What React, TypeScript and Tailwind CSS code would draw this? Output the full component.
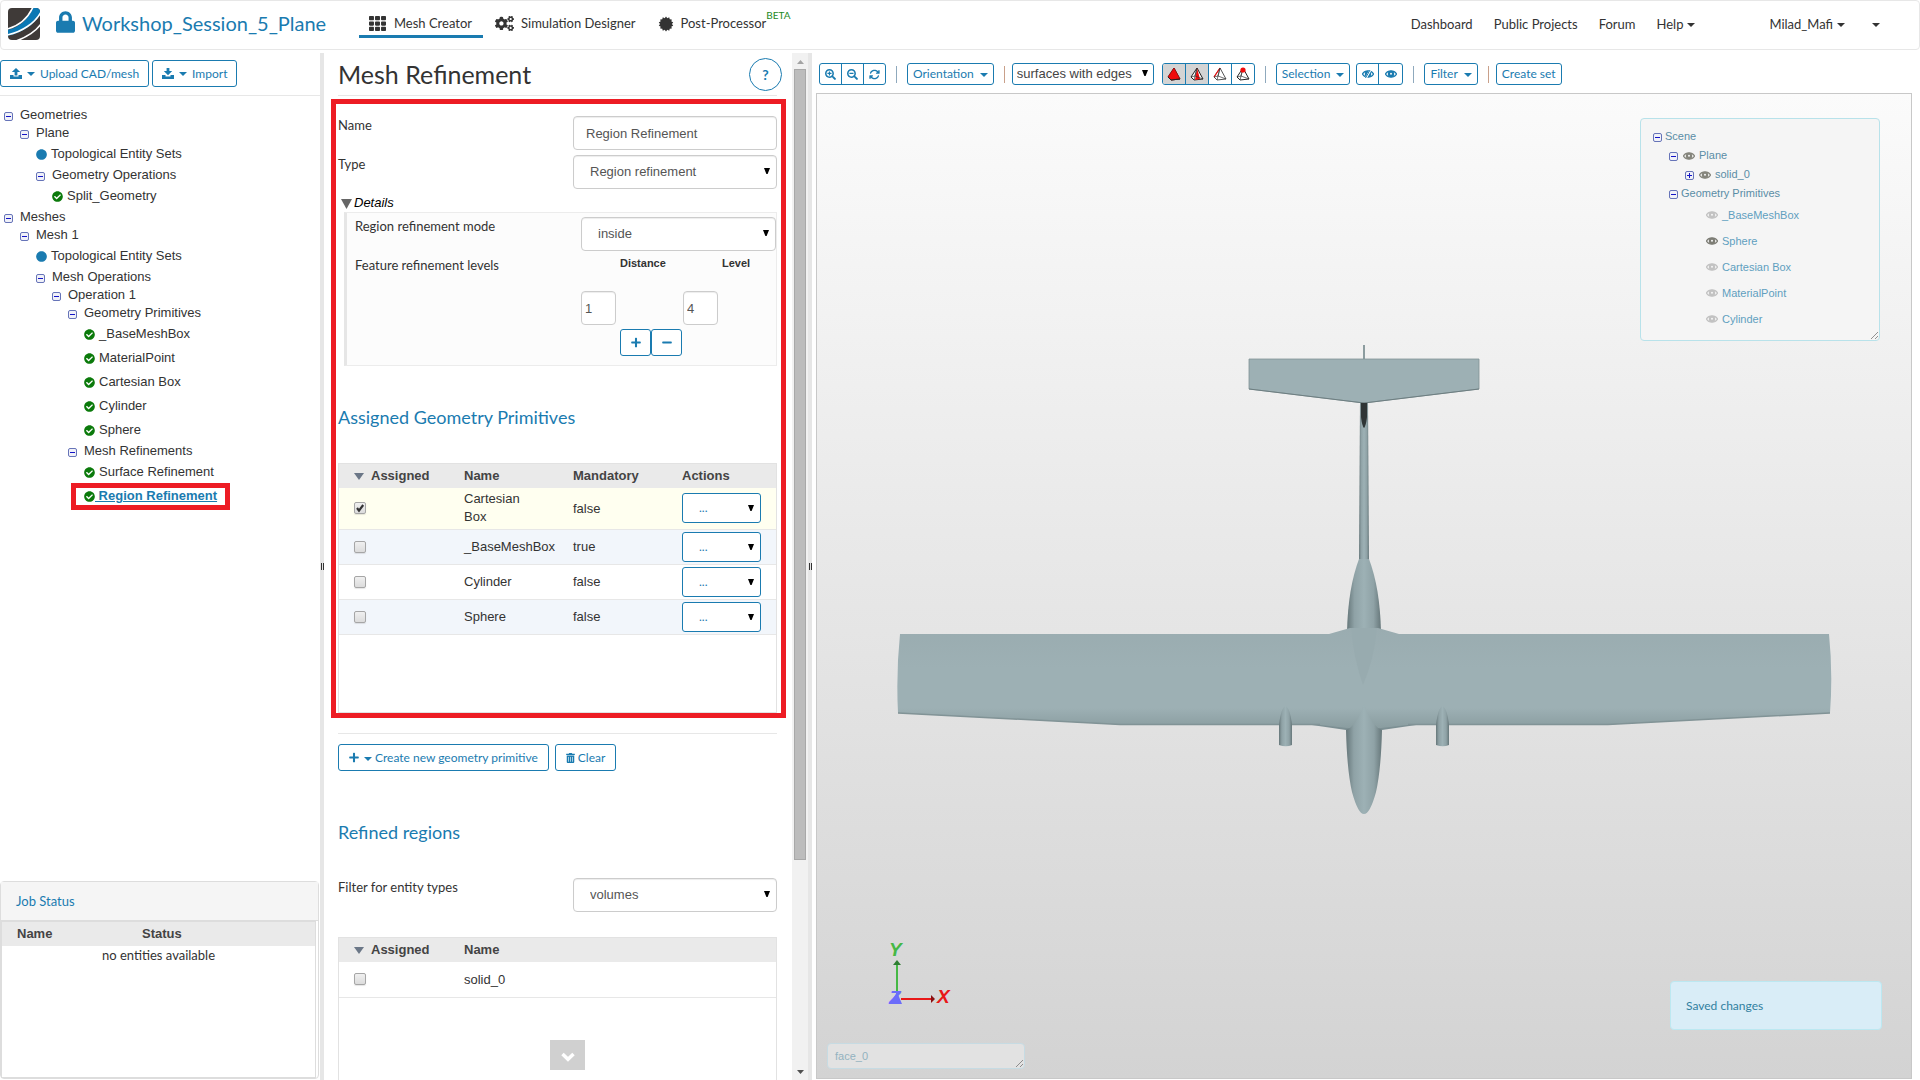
import React, { useState } from "react";
import clsx from "clsx";
import {
  FaCheckCircle,
  FaCircle,
  FaCogs,
  FaLock,
  FaMinus,
  FaPlus,
  FaSearchMinus,
  FaSearchPlus,
  FaTh,
  FaTrashAlt,
} from "react-icons/fa";
import { FaArrowsRotate } from "react-icons/fa6";

const lato = "font-['Lato','Liberation_Sans',sans-serif]";
const btn =
  "inline-flex items-center justify-center border border-[#1a7bb0] bg-white text-[#1a7bb0] text-[12px] rounded-[3px]";

function Caret({ className }: { className?: string }) {
  return (
    <svg viewBox="0 0 8 4" className={clsx("w-2 h-1 shrink-0", className)} fill="currentColor" aria-hidden>
      <path d="M0 0h8L4 4z" />
    </svg>
  );
}

function Logo() {
  return (
    <svg viewBox="0 0 32 32" className="w-8 h-8 shrink-0" aria-hidden>
      <defs>
        <clipPath id="logo-clip">
          <rect width="32" height="32" rx="4" />
        </clipPath>
      </defs>
      <g clipPath="url(#logo-clip)">
        <rect width="32" height="32" fill="#3f3a38" />
        <path d="M-1 22C11 20 21 11 25 -1H34V4C28 15 15 25 -1 28z" fill="#0a78b4" />
        <path d="M-1 21C11 18 20 10 25 -1" fill="none" stroke="#fff" strokeWidth="1.6" />
        <path d="M-1 27C14 24 27 15 33 4" fill="none" stroke="#fff" strokeWidth="1.6" />
        <path d="M8 33C19 29 28 23 33 16" fill="none" stroke="#fff" strokeWidth="1.6" />
      </g>
    </svg>
  );
}

function Badge() {
  const points = Array.from({ length: 28 }, (_, i) => {
    const r = i % 2 ? 6 : 7.4;
    const a = (i * Math.PI) / 14;
    return `${(8 + r * Math.sin(a)).toFixed(2)},${(8 - r * Math.cos(a)).toFixed(2)}`;
  }).join(" ");
  return (
    <svg viewBox="0 0 16 16" className="w-4 h-4" fill="currentColor" aria-hidden>
      <polygon points={points} />
    </svg>
  );
}

function TrayIcon({ down }: { down?: boolean }) {
  return (
    <svg viewBox="0 0 12 11" className="w-3 h-[11px]" fill="currentColor" aria-hidden>
      <path d="M0 7h3.5v1.4h5V7H12v4H0z" />
      {down ? <path d="M4.6 0h2.8v3h2.8L6 7.2 1.8 3h2.8z" /> : <path d="M6 0l4.2 4H7.4v3.4H4.6V4H1.8z" />}
    </svg>
  );
}

function Eye({ off, className }: { off?: boolean; className?: string }) {
  return (
    <svg viewBox="0 0 12 8" className={clsx("w-3 h-2 shrink-0", className)} aria-hidden>
      <path d="M.4 4C3 -.2 9 -.2 11.6 4 9 8.2 3 8.2 .4 4z" fill="none" stroke="currentColor" strokeWidth="1.2" />
      <circle cx="6" cy="4" r="3.2" fill="currentColor" />
      <circle cx="6" cy="3.7" r="1" fill="#f5f5f5" />
      {off && <path d="M4 8L8.5 0" stroke="#fff" strokeWidth="2" />}
      {off && <path d="M3.5 8L8 0" stroke="currentColor" strokeWidth="1" />}
    </svg>
  );
}

function Toggle({ plus }: { plus?: boolean }) {
  return (
    <svg viewBox="0 0 9 9" className="w-[9px] h-[9px] shrink-0 mt-[2px]" aria-hidden>
      <rect x=".5" y=".5" width="8" height="8" rx="1.5" fill="#f0f1f8" stroke="#6674b8" />
      <path d={plus ? "M2 4.5h5M4.5 2v5" : "M2 4.5h5"} stroke="#1414c8" />
    </svg>
  );
}

function Cone({ faces, edges }: { faces: string; edges?: boolean }) {
  return (
    <svg viewBox="0 0 14 14" className="w-[14px] h-[14px]" aria-hidden>
      <path d="M7 1L1 10l3 3 9-1z" fill="#fff" stroke={edges ? "#222" : "#555"} strokeWidth="1" />
      {faces === "all" && <path d="M7 1L1 10l3 3 9-1z" fill="#f00c0c" stroke="#a00" strokeWidth=".6" />}
      {faces === "front" && <path d="M7 1L5 13l5-1z" fill="#f00c0c" />}
      {faces === "edge" && <path d="M7 1L1 10" stroke="#f00c0c" strokeWidth="1.2" />}
      {faces !== "all" && <path d="M7 1L5 9l-4 1M5 9l8 3M7 1l-3 12" fill="none" stroke="#333" strokeWidth=".7" />}
      {faces === "all" && <path d="M1 10l3 3 9-1" fill="none" stroke="#222" strokeWidth="1" />}
      {faces === "point" && <circle cx="7" cy="3" r="2.6" fill="#f00c0c" />}
    </svg>
  );
}

type Option = { id: string; value: string; className?: string };

function FormSelect({ id, value, className }: Option) {
  return (
    <div className={clsx("relative", className)}>
      <select
        id={id}
        className="appearance-none w-full h-[34px] pl-4 pr-6 border border-[#ccc] rounded-[4px] bg-white text-[13px] text-[#555] shadow-[inset_0_1px_1px_rgba(0,0,0,0.075)]"
      >
        <option>{value}</option>
      </select>
      <Arrow className="right-[7px] top-[13px]" />
    </div>
  );
}

function Arrow({ className }: { className?: string }) {
  return (
    <svg viewBox="0 0 6 6" className={clsx("absolute w-[6px] h-[6px] pointer-events-none", className)} aria-hidden>
      <path d="M0 0h6L3.6 6H2.4z" />
    </svg>
  );
}

function Check({ label, checked }: { label: string; checked?: boolean }) {
  return (
    <span className="relative block w-3 h-3">
      <input
        type="checkbox"
        aria-label={label}
        defaultChecked={checked}
        className="peer appearance-none block w-3 h-3 border border-[#a6a6a6] rounded-[2px] bg-gradient-to-b from-[#f0f0f0] to-[#dcdcdc] shadow-[0_1px_1px_rgba(0,0,0,0.1)]"
      />
      <svg viewBox="0 0 12 12" className="absolute inset-0 hidden peer-checked:block pointer-events-none">
        <path d="M3 6l2 2.6L9.2 3" fill="none" stroke="#333" strokeWidth="2.2" />
      </svg>
    </span>
  );
}

type Node = { level: number; label: string; kind: "folder" | "set" | "done"; active?: boolean };

const tree: Node[] = [
  { level: 0, label: "Geometries", kind: "folder" },
  { level: 1, label: "Plane", kind: "folder" },
  { level: 2, label: "Topological Entity Sets", kind: "set" },
  { level: 2, label: "Geometry Operations", kind: "folder" },
  { level: 3, label: "Split_Geometry", kind: "done" },
  { level: 0, label: "Meshes", kind: "folder" },
  { level: 1, label: "Mesh 1", kind: "folder" },
  { level: 2, label: "Topological Entity Sets", kind: "set" },
  { level: 2, label: "Mesh Operations", kind: "folder" },
  { level: 3, label: "Operation 1", kind: "folder" },
  { level: 4, label: "Geometry Primitives", kind: "folder" },
  { level: 5, label: "_BaseMeshBox", kind: "done" },
  { level: 5, label: "MaterialPoint", kind: "done" },
  { level: 5, label: "Cartesian Box", kind: "done" },
  { level: 5, label: "Cylinder", kind: "done" },
  { level: 5, label: "Sphere", kind: "done" },
  { level: 4, label: "Mesh Refinements", kind: "folder" },
  { level: 5, label: "Surface Refinement", kind: "done" },
  { level: 5, label: "Region Refinement", kind: "done", active: true },
];

const indent = ["pl-1", "pl-5", "pl-9", "pl-[52px]", "pl-[68px]", "pl-[84px]"];

const sceneItems = [
  { label: "_BaseMeshBox", on: false },
  { label: "Sphere", on: true },
  { label: "Cartesian Box", on: false },
  { label: "MaterialPoint", on: false },
  { label: "Cylinder", on: false },
];

const primitives = [
  { name: "Cartesian Box", mandatory: "false", checked: true },
  { name: "_BaseMeshBox", mandatory: "true", checked: false },
  { name: "Cylinder", mandatory: "false", checked: false },
  { name: "Sphere", mandatory: "false", checked: false },
];

function Header() {
  return (
    <header className={clsx("h-[50px] shrink-0 flex items-start border border-[#e7e7e7] rounded-[4px] pl-[7px] pr-[39px] text-[#333]", lato)}>
      <div className="mt-[7px]">
        <Logo />
      </div>
      <FaLock className="w-[19px] h-[22px] ml-4 mt-[10px] text-[#1a7bb0]" />
      <a href="#" className="ml-[7px] mt-2 text-[20px] leading-[28px] text-[#1a7bb0] w-[244px]">
        Workshop_Session_5_Plane
      </a>
      <nav className="flex ml-[33px] text-[13px]">
        <a href="#" className="flex items-center h-[37px] pl-[10px] pr-[11px] pt-[14px] pb-[3px] border-b-[3px] border-[#1a7bb0]">
          <FaTh className="w-[17px] h-[17px] mr-2" />
          Mesh Creator
        </a>
        <a href="#" className="flex items-center h-[37px] pt-[14px] pb-[6px] ml-3">
          <FaCogs className="w-[19px] h-[17px] mr-[7px]" />
          Simulation Designer
        </a>
        <a href="#" className="flex items-center h-[37px] pt-[14px] pb-[6px] ml-[22px]">
          <Badge />
          <span className="ml-[7px]">Post-Processor</span>
          <span className="-mt-[6px] text-[10px] leading-[12px] text-[#1d8a1d] self-start">BETA</span>
        </a>
      </nav>
      <nav className="flex items-center ml-auto mt-[13px] text-[13px] leading-[20px]">
        <a href="#">Dashboard</a>
        <a href="#" className="ml-[21px]">Public Projects</a>
        <a href="#" className="ml-[21px]">Forum</a>
        <button className="ml-[21px] flex items-center gap-1">
          Help <Caret className="mt-[2px]" />
        </button>
        <button className="ml-[74px] flex items-center gap-1">
          Milad_Mafi <Caret className="mt-[2px]" />
        </button>
        <button className="ml-[27px] h-5" aria-label="More">
          <Caret className="mt-[2px]" />
        </button>
      </nav>
    </header>
  );
}

function Sidebar() {
  return (
    <aside className="w-[320px] shrink-0 flex flex-col">
      <div className={clsx("h-[43px] shrink-0 border-b border-[#e7e7e7] flex gap-[3px] pt-[7px]", lato)}>
        <button className={clsx(btn, "h-[27px] px-[9px] gap-[5px]")}>
          <TrayIcon /> <Caret /> <span>Upload CAD/mesh</span>
        </button>
        <button className={clsx(btn, "h-[27px] px-[9px] gap-[5px]")}>
          <TrayIcon down /> <Caret /> <span>Import</span>
        </button>
      </div>
      <ul className="pt-[10px] text-[13px] leading-[18px]">
        {tree.map((n, i) => (
          <li key={i} className={clsx("flex items-center relative", indent[n.level], n.kind === "folder" ? "h-[18px]" : "h-6")}>
            {n.kind === "folder" && <Toggle />}
            {n.kind === "set" && <FaCircle className="w-[11px] h-[11px] text-[#1a7bb0]" />}
            {n.kind === "done" && <FaCheckCircle className="w-[11px] h-[11px] text-[#0b7a0b]" />}
            {n.active ? (
              <a href="#" className="font-bold underline text-[#1a7bb0] whitespace-pre">{" " + n.label}</a>
            ) : (
              <span className={n.kind === "folder" ? "ml-[7px]" : "ml-1"}>{n.label}</span>
            )}
            {n.active && <span className="absolute left-[71px] -top-px w-[159px] h-[27px] border-[5px] border-[#ed1c24]" />}
          </li>
        ))}
      </ul>
      <section className="mt-auto mb-px h-[198px] mr-px border border-[#ddd] rounded-[4px] flex flex-col">
        <h2 className={clsx("h-[39px] shrink-0 bg-[#f5f5f5] border-b border-[#ddd] pl-[15px] text-[13px] leading-[38px] text-[#1a7bb0]", lato)}>
          Job Status
        </h2>
        <div className="flex-1 mr-[2px] border border-[#ddd]">
          <table className="w-full table-fixed text-[13px]">
            <thead>
              <tr className="h-6 bg-[#eaeaea] text-[#444] text-left">
                <th className="w-[125px] pl-[15px]">Name</th>
                <th className="pl-[15px]">Status</th>
              </tr>
            </thead>
            <tbody>
              <tr>
                <td colSpan={2} className={clsx("text-center leading-[18px]", lato)}>no entities available</td>
              </tr>
            </tbody>
          </table>
        </div>
      </section>
    </aside>
  );
}

function Splitter() {
  return (
    <div className="w-1 shrink-0 bg-[#e6e6e6] flex items-center justify-center">
      <span className="w-[3px] h-[7px] border-x border-[#333]" />
    </div>
  );
}

function GridHead({ columns }: { columns: string[] }) {
  return (
    <thead>
      <tr className="h-6 bg-[#eaeaea] text-[#444] text-left">
        {columns.map((c, i) => (
          <th key={c} className={clsx("pl-[15px]", i === 0 && "w-[110px]")}>
            {i === 0 ? (
              <span className="flex items-center gap-[7px]">
                <svg viewBox="0 0 10 7" className="w-[10px] h-[7px]" aria-hidden>
                  <path d="M0 0h10L5 7z" fill="#6b7787" />
                </svg>
                {c}
              </span>
            ) : (
              c
            )}
          </th>
        ))}
      </tr>
    </thead>
  );
}

function Details() {
  const [rows, setRows] = useState([{ distance: "1", level: "4" }]);
  const field =
    "w-[35px] h-[34px] pl-[3px] border border-[#ccc] rounded-[4px] bg-white text-[13px] text-[#555] shadow-[inset_0_1px_1px_rgba(0,0,0,0.075)]";
  return (
    <div className="ml-[6px] min-h-[154px] border border-l-[3px] border-[#ececec] border-l-[#e6e6e6] bg-[#fcfcfc] pl-2 pt-1">
      <div className="flex">
        <label htmlFor="mode" className={clsx("w-[226px] shrink-0 text-[13px] leading-[18px]", lato)}>
          Region refinement mode
        </label>
        <FormSelect id="mode" value="inside" className="flex-1" />
      </div>
      <div className="flex mt-[5px]">
        <span className={clsx("w-[226px] shrink-0 text-[13px] leading-[18px]", lato)}>Feature refinement levels</span>
        <div className="flex-1">
          <div className="grid grid-cols-[102px_1fr] text-[11px] leading-[14px] font-bold h-[35px]">
            <span className="pl-[39px]">Distance</span>
            <span className="pl-[39px]">Level</span>
          </div>
          {rows.map((r, i) => (
            <div key={i} className="grid grid-cols-[102px_1fr]">
              <input aria-label="Distance" defaultValue={r.distance} className={field} />
              <input aria-label="Level" defaultValue={r.level} className={field} />
            </div>
          ))}
          <div className="flex pl-[39px] mt-1">
            <button aria-label="Add level" onClick={() => setRows([...rows, { distance: "", level: "" }])} className={clsx(btn, "w-[31px] h-[27px]")}>
              <FaPlus className="w-[10px] h-[11px]" />
            </button>
            <button aria-label="Remove level" onClick={() => setRows(rows.slice(0, -1))} className={clsx(btn, "w-[31px] h-[27px]")}>
              <FaMinus className="w-[10px] h-[11px]" />
            </button>
          </div>
        </div>
      </div>
    </div>
  );
}

function RefinementForm() {
  const [open, setOpen] = useState(true);
  const formLabel = clsx("w-[235px] shrink-0 text-[13px] leading-[18px]", lato);
  const heading = clsx("h-6 text-[18px] leading-6 text-[#1a7bb0]", lato);
  return (
    <main className="relative flex-1 min-w-0 flex flex-col overflow-hidden pl-[14px] pr-[15px] text-[13px]">
      <div className="h-[43px] shrink-0 border-b border-[#e7e7e7] flex items-start justify-between">
        <h1 className={clsx("text-[25px] leading-[42px]", lato)}>Mesh Refinement</h1>
        <button className={clsx("w-[33px] h-[33px] mt-[5px] -mr-[5px] rounded-full border border-[#1a7bb0] text-[#1a7bb0] text-[14px] font-bold", lato)}>
          ?
        </button>
      </div>

      <section className="mt-[3px] -ml-[7px] -mr-[9px] shrink-0 border-[5px] border-[#ed1c24] pl-[2px] pr-1 pt-3">
        <div className="flex">
          <label htmlFor="name" className={formLabel}>Name</label>
          <input
            id="name"
            defaultValue="Region Refinement"
            className="flex-1 min-w-0 h-[34px] px-3 border border-[#ccc] rounded-[4px] text-[#555] shadow-[inset_0_1px_1px_rgba(0,0,0,0.075)]"
          />
        </div>
        <div className="flex mt-[5px]">
          <label htmlFor="type" className={formLabel}>Type</label>
          <FormSelect id="type" value="Region refinement" className="flex-1" />
        </div>
        <button onClick={() => setOpen(!open)} aria-expanded={open} className="mt-[5px] ml-[3px] h-[18px] flex items-center gap-[2px] italic text-black">
          <svg viewBox="0 0 11 10" className="w-[11px] h-[10px] mt-[2px]" aria-hidden>
            <path d="M0 0h11L5.5 10z" fill="#666" />
          </svg>
          Details
        </button>
        {open && <Details />}

        <h2 className={clsx(heading, "mt-[39px] mb-[34px]")}>Assigned Geometry Primitives</h2>
        <div className="h-[250px] border border-[#e2e2e2]">
          <table className="w-full table-fixed">
            <GridHead columns={["Assigned", "Name", "Mandatory", "Actions"]} />
            <tbody>
              {primitives.map((p) => (
                <tr key={p.name} className={clsx("border-b border-[#e7e7e7]", p.checked ? "h-[41px] bg-[#fffff0]" : "h-[35px] even:bg-[#f2f6fb]")}>
                  <td className="pl-[15px]">
                    <Check label={p.name} checked={p.checked} />
                  </td>
                  <td className="pl-[15px] pr-4 leading-[18px]">{p.name}</td>
                  <td className="pl-[15px]">{p.mandatory}</td>
                  <td className="pl-[15px] pr-[15px]">
                    <div className="relative">
                      <select
                        aria-label={"Actions for " + p.name}
                        className={clsx("appearance-none block w-full h-[30px] pl-4 border border-[#1a7bb0] rounded-[3px] bg-white text-[12px] text-[#1a7bb0]", lato)}
                      >
                        <option>...</option>
                      </select>
                      <Arrow className="right-[7px] top-[12px]" />
                    </div>
                  </td>
                </tr>
              ))}
            </tbody>
          </table>
        </div>
      </section>

      <div className={clsx("mt-[15px] pt-[10px] border-t border-[#e7e7e7] shrink-0 flex gap-[6px]", lato)}>
        <button className={clsx(btn, "h-[27px] px-[10px]")}>
          <FaPlus className="w-[10px] h-[11px]" />
          <Caret className="ml-[5px] mr-[3px] mt-[2px]" />
          Create new geometry primitive
        </button>
        <button className={clsx(btn, "h-[27px] px-[10px] gap-[3px]")}>
          <FaTrashAlt className="w-[9px] h-[10px]" />
          Clear
        </button>
      </div>

      <h2 className={clsx(heading, "mt-[49px] mb-[34px] shrink-0")}>Refined regions</h2>
      <div className="flex shrink-0">
        <label htmlFor="entity" className={formLabel}>Filter for entity types</label>
        <FormSelect id="entity" value="volumes" className="flex-1" />
      </div>
      <div className="mt-[25px] flex-1 border border-b-0 border-[#e2e2e2]">
        <table className="w-full table-fixed">
          <GridHead columns={["Assigned", "Name"]} />
          <tbody>
            <tr className="h-[35px] border-b border-[#e7e7e7]">
              <td className="pl-[15px]">
                <Check label="solid_0" />
              </td>
              <td className="pl-[15px]">solid_0</td>
            </tr>
          </tbody>
        </table>
      </div>
      <button aria-label="Scroll down" className="absolute left-[226px] bottom-[10px] w-[35px] h-[30px] bg-[#d0d0d0] flex items-center justify-center">
        <svg viewBox="0 0 14 10" className="w-[14px] h-[10px] mt-[3px]" aria-hidden>
          <path d="M1.5 2L7 7.3 12.5 2" fill="none" stroke="#fff" strokeWidth="3.5" />
        </svg>
      </button>
    </main>
  );
}

function Scrollbar() {
  return (
    <div className="w-4 shrink-0 bg-[#f1f1f1] flex flex-col items-center">
      <svg viewBox="0 0 16 16" className="w-4 h-4 shrink-0" aria-hidden>
        <path d="M5 11l3.5-4 3.5 4z" fill="#a3a3a3" />
      </svg>
      <div className="w-full flex-1 px-[2px] pb-[204px]">
        <div className="h-full bg-[#bcbcbc] border border-[#a8a8a8]" />
      </div>
      <svg viewBox="0 0 16 16" className="w-4 h-4 shrink-0" aria-hidden>
        <path d="M5 6l3.5 4L12 6z" fill="#505050" />
      </svg>
    </div>
  );
}

function Sep({ tight }: { tight?: boolean }) {
  return <span className={clsx("w-px h-[17px] ml-[10px]", tight ? "mr-[7px] bg-[#c9a08a]" : "mr-[10px] bg-[#8fa9bd]")} />;
}

function Toolbar() {
  const cell = "flex items-center justify-center h-5";
  const group = "flex h-[22px] border border-[#1a7bb0] rounded-[3px] divide-x divide-[#1a7bb0] text-[#1a7bb0] overflow-hidden";
  return (
    <div className={clsx("flex items-center h-[22px] mt-[10px] mb-2 ml-[3px] shrink-0", lato)}>
      <div className={group}>
        <button aria-label="Zoom in" className={clsx(cell, "w-[22px]")}><FaSearchPlus className="w-[11px] h-[11px]" /></button>
        <button aria-label="Zoom out" className={clsx(cell, "w-[22px]")}><FaSearchMinus className="w-[11px] h-[11px]" /></button>
        <button aria-label="Reset view" className={clsx(cell, "w-[21px]")}><FaArrowsRotate className="w-[11px] h-[11px]" /></button>
      </div>
      <Sep />
      <button className={clsx(btn, "h-[22px] px-[5px] gap-[6px]")}>Orientation <Caret className="mt-[2px]" /></button>
      <Sep tight />
      <div className="relative">
        <select aria-label="Render mode" className="appearance-none block h-[22px] w-[142px] pl-1 border border-[#1a7bb0] rounded-[3px] bg-white font-['Liberation_Sans',sans-serif] text-[13px] text-[#444]">
          <option>surfaces with edges</option>
        </select>
        <Arrow className="right-[6px] top-[7px]" />
      </div>
      <div className={clsx(group, "ml-2")}>
        <button aria-label="Pick volumes" className={clsx(cell, "w-[23px] bg-[#d4d4d4]")}><Cone faces="all" edges /></button>
        <button aria-label="Pick faces" className={clsx(cell, "w-[23px] bg-[#d4d4d4]")}><Cone faces="front" edges /></button>
        <button aria-label="Pick edges" className={clsx(cell, "w-[23px]")}><Cone faces="edge" /></button>
        <button aria-label="Pick vertices" className={clsx(cell, "w-[22px]")}><Cone faces="point" edges /></button>
      </div>
      <Sep />
      <button className={clsx(btn, "h-[22px] px-[5px] gap-[6px]")}>Selection <Caret className="mt-[2px]" /></button>
      <div className={clsx(group, "ml-[6px]")}>
        <button aria-label="Hide selection" className={clsx(cell, "w-[22px]")}><Eye off /></button>
        <button aria-label="Show selection" className={clsx(cell, "w-[23px]")}><Eye /></button>
      </div>
      <Sep />
      <button className={clsx(btn, "h-[22px] px-[5px] gap-[6px]")}>Filter <Caret className="mt-[2px]" /></button>
      <Sep tight />
      <button className={clsx(btn, "h-[22px] px-[5px]")}>Create set</button>
    </div>
  );
}

function Plane() {
  return (
    <svg viewBox="817 94 1094 984" className="absolute inset-0 w-full h-full" aria-hidden>
      <defs>
        <linearGradient id="wing" x1="0" y1="0" x2="0" y2="1">
          <stop offset="0" stopColor="#9aacb0" />
          <stop offset=".4" stopColor="#9db0b4" />
          <stop offset=".8" stopColor="#9db0b4" />
          <stop offset="1" stopColor="#8a9da0" />
        </linearGradient>
        <linearGradient id="tube" x1="0" y1="0" x2="1" y2="0">
          <stop offset="0" stopColor="#66777a" />
          <stop offset=".22" stopColor="#8fa2a6" />
          <stop offset=".5" stopColor="#9db1b5" />
          <stop offset=".78" stopColor="#8fa2a6" />
          <stop offset="1" stopColor="#66777a" />
        </linearGradient>
      </defs>
      <path d="M1364 345v15" stroke="#8c9c9f" strokeWidth="2" />
      <path d="M1360 400h8l1 160h-10z" fill="url(#tube)" />
      <path d="M1249 359h230v30l-115 14-115-14z" fill="#9db0b4" stroke="#829396" strokeWidth=".8" />
      <path d="M1249 389l115 14 115-14" fill="none" stroke="#6d7e81" strokeWidth="1" />
      <path d="M1361 403h6v14q-1 9-3 11-2-2-3-11z" fill="#2f3536" />
      <path d="M1359 559Q1348 588 1347 632h34Q1380 588 1369 559z" fill="url(#tube)" />
      <path d="M1305 724l41 6h36l41-6z" fill="#7c8f93" />
      <path
        d="M900 634H1329L1350 628H1378L1399 634H1829Q1833 673 1830 713L1608 724.5H1412L1381 728H1347L1316 724.5H1120L898 713Q896 673 900 634z"
        fill="url(#wing)"
      />
      <path d="M898 713L1120 724.5H1320M1408 724.5H1608L1830 713" fill="none" stroke="#819396" strokeWidth="1.5" />
      <path d="M1351 628Q1354 660 1363 685Q1374 660 1377 628z" fill="#98abaf" />
      <path d="M1364 702Q1360 720 1350 728L1346 730Q1347 770 1352 792 1358 814 1364 814 1370 814 1376 792 1381 770 1382 730L1378 728Q1368 720 1364 702z" fill="url(#tube)" />
      <path d="M1279 745V725Q1281 708 1285.5 706 1290 708 1292 725V745Q1286 747.5 1279 745z" fill="url(#tube)" />
      <path d="M1436 745V725Q1438 708 1442.5 706 1447 708 1449 725V745Q1443 747.5 1436 745z" fill="url(#tube)" />
      <g strokeWidth="2">
        <path d="M897 995V965" stroke="#45b845" />
        <path d="M893 965l4-5 4 5z" fill="#2e7d32" />
        <path d="M901 999h31" stroke="#e81818" />
        <path d="M931 995l4 4-4 4z" fill="#8a1010" />
        <path d="M890 1004l7-12 5 12z" fill="#6c6cfa" />
      </g>
      <g fontFamily="'Liberation Sans', sans-serif" fontWeight="bold" fontStyle="italic" fontSize="19">
        <text x="889" y="956" fill="#45b845">Y</text>
        <text x="937" y="1003" fill="#e81818">X</text>
        <text x="889" y="1004" fill="#6c6cfa">Z</text>
      </g>
    </svg>
  );
}

function Grip() {
  return (
    <svg viewBox="0 0 8 8" className="absolute right-px bottom-px w-2 h-2" aria-hidden>
      <path d="M1 8L8 1M5 8l3-3" stroke="#777" strokeWidth=".8" />
    </svg>
  );
}

function Viewer() {
  return (
    <section className="relative flex-1 mb-px border border-[#c8c8c8] bg-gradient-to-b from-[#fbfbfb] to-[#d3d3d3] overflow-hidden">
      <Plane />
      <div className="absolute right-[31px] top-6 w-[240px] h-[223px] border border-[#b8e2ea] rounded-[4px] bg-[#f5f5f5] pt-2 text-[11px] leading-[19px] text-[#5a8da6]">
        <div className="flex items-center h-[19px] pl-3 gap-[3px]"><Toggle />Scene</div>
        <div className="flex items-center h-[19px] pl-7"><Toggle /><Eye className="ml-[5px] mr-1 text-[#85857c]" />Plane</div>
        <div className="flex items-center h-[19px] pl-11"><Toggle plus /><Eye className="ml-[5px] mr-1 text-[#85857c]" />solid_0</div>
        <div className="flex items-center h-[18px] pl-7 gap-[3px]"><Toggle />Geometry Primitives</div>
        {sceneItems.map((s) => (
          <div key={s.label} className="flex items-center h-[26px] pl-[65px] gap-1 text-[#5f9fbf]">
            <Eye className={s.on ? "text-[#7c7c74]" : "text-[#c2c2c2]"} />
            {s.label}
          </div>
        ))}
        <Grip />
      </div>
      <div className="absolute left-[10px] bottom-[9px] w-[198px] h-[26px] border border-[#c6dbe3] rounded-[4px] bg-[#e2e2e2] pl-[7px] text-[11px] leading-[25px] text-[#93b2c0]">
        face_0
        <Grip />
      </div>
      <div role="status" className={clsx("absolute right-[29px] bottom-[48px] w-[212px] h-[49px] border border-[#bce8f1] rounded-[4px] bg-[#d9edf7] pl-[15px] text-[12px] leading-[48px] text-[#31809f]", lato)}>
        Saved changes
      </div>
    </section>
  );
}

export default function App() {
  return (
    <div className="h-screen flex flex-col overflow-hidden bg-white text-[#333] font-['Liberation_Sans',sans-serif]">
      <Header />
      <div className="flex flex-1 min-h-0 mt-[3px]">
        <Sidebar />
        <Splitter />
        <div className="w-[484px] shrink-0 flex min-h-0">
          <RefinementForm />
          <Scrollbar />
        </div>
        <Splitter />
        <div className="flex-1 min-w-0 flex flex-col pl-1 pr-[8px]">
          <Toolbar />
          <Viewer />
        </div>
      </div>
    </div>
  );
}
